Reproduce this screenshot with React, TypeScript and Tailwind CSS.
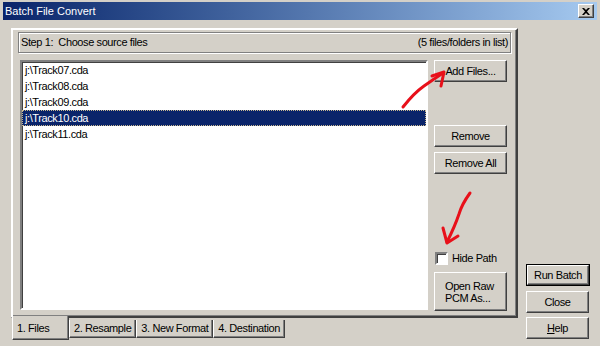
import React from 'react';

const face = 'bg-[#d4d0c8]';
const raised =
  'border border-t-white border-l-white border-r-[#404040] border-b-[#404040] shadow-[inset_-1px_-1px_0_#808080]';

const Button = ({ children, className = '' }: { children: React.ReactNode; className?: string }) => (
  <div className={`${face} ${raised} flex items-center justify-center text-center leading-[12px] ${className}`}>
    {children}
  </div>
);

const files = ['j:\\Track07.cda', 'j:\\Track08.cda', 'j:\\Track09.cda', 'j:\\Track10.cda', 'j:\\Track11.cda'];
const tabs = ['2. Resample', '3. New Format', '4. Destination'];

export default function App() {
  return (
    <div
      className={`relative w-[600px] h-[346px] overflow-hidden ${face} pt-[2px] px-[3px] text-[11px] text-black tracking-[-0.4px]`}
      style={{ fontFamily: '"Liberation Sans", Arial, sans-serif' }}
    >
      {/* title bar */}
      <div className="h-[18px] flex items-center justify-between pl-[2px] pr-[3px] bg-gradient-to-r from-[#0a246a] to-[#a6caf0]">
        <span className="text-white text-[11px] tracking-normal">Batch File Convert</span>
        <div className={`w-[16px] h-[14px] ${face} ${raised} flex items-center justify-center`}>
          <svg width="8" height="7" viewBox="0 0 8 7">
            <path d="M0 0h2l2 2 2-2h2L5 3.5 8 7H6L4 5 2 7H0l3-3.5z" fill="#000" />
          </svg>
        </div>
      </div>

      <div className="flex mt-[8px]">
        {/* tab control */}
        <div className="ml-[8px] w-[507px] flex flex-col">
          <div className="h-[290px] border-2 border-t-white border-l-white border-r-[#404040] border-b-[#404040] shadow-[inset_-1px_-1px_0_#808080] px-[5px] pt-[2px]">
            <div className="h-[21px] flex items-center justify-between px-[2px] border border-[#808080] shadow-[inset_1px_1px_0_#fff,1px_1px_0_#fff]">
              <span>Step 1:&nbsp; Choose source files</span>
              <span>(5 files/folders in list)</span>
            </div>
            <div className="flex mt-[7px] pl-[2px]">
              <div className="w-[408px] h-[250px] bg-white border-2 border-t-[#808080] border-l-[#808080] border-r-white border-b-white shadow-[inset_1px_1px_0_#404040]">
                {files.map((f, i) => (
                  <div
                    key={f}
                    className={`h-[16px] flex items-center pl-[3px] ${
                      i === 3 ? 'bg-[#0a246a] text-white outline outline-1 outline-dotted outline-[#c8b890] -outline-offset-1' : ''
                    }`}
                  >
                    {f}
                  </div>
                ))}
              </div>
              <div className="ml-[6px] w-[73px] flex flex-col">
                <Button className="h-[22px]">Add Files...</Button>
                <Button className="h-[22px] mt-[43px]">Remove</Button>
                <Button className="h-[22px] mt-[5px]">Remove All</Button>
                <div className="flex items-center mt-[78px] h-[13px] pl-[1px]">
                  <div className="w-[13px] h-[13px] bg-white border-2 border-t-[#808080] border-l-[#808080] border-r-white border-b-white shadow-[inset_1px_1px_0_#404040]" />
                  <span className="ml-[4px]">Hide Path</span>
                </div>
                <Button className="h-[39px] mt-[7px] flex-col !items-start pl-[10px] leading-[12px]">
                  <span>Open Raw</span>
                  <span>PCM As...</span>
                </Button>
              </div>
            </div>
          </div>
          {/* tabs */}
          <div className="flex">
            <div className="relative z-10 -mt-[2px] ml-[1px] w-[57px] h-[24px] bg-[#d4d0c8] border-l border-l-white border-r border-r-[#404040] border-b border-b-[#404040] shadow-[inset_-1px_-1px_0_#808080] flex items-center pl-[4px] pt-[1px]">
              1. Files
            </div>
            {tabs.map((t) => (
              <div
                key={t}
                className="h-[18px] mt-[2px] px-[4px] flex items-center border-l border-l-white border-r border-r-[#404040] border-b border-b-[#404040] shadow-[inset_-1px_-1px_0_#808080]"
              >
                {t}
              </div>
            ))}
          </div>
        </div>

        {/* right column */}
        <div className="ml-[8px] w-[64px] flex flex-col pt-[236px]">
          <div className="border border-black">
            <Button className="h-[20px]">Run Batch</Button>
          </div>
          <Button className="h-[22px] mt-[5px] w-[63px]">Close</Button>
          <Button className="h-[22px] mt-[4px] w-[63px]">
            <span>
              <span className="underline">H</span>elp
            </span>
          </Button>
        </div>
      </div>

      {/* hand-drawn annotations */}
      <svg className="absolute inset-0 pointer-events-none" width="600" height="346" viewBox="0 0 600 346">
        <g fill="none" stroke="#e8101a" strokeWidth="3" strokeLinecap="round" strokeLinejoin="round">
          <path d="M403 107 Q414 93 424 86 Q434 79 443 73" />
          <path d="M432 76 L444 72 L441 86" />
          <path d="M470 193 Q462 204 459 214 Q455 226 447 242" />
          <path d="M443 228 L447 243 L458 236" />
        </g>
      </svg>
    </div>
  );
}
